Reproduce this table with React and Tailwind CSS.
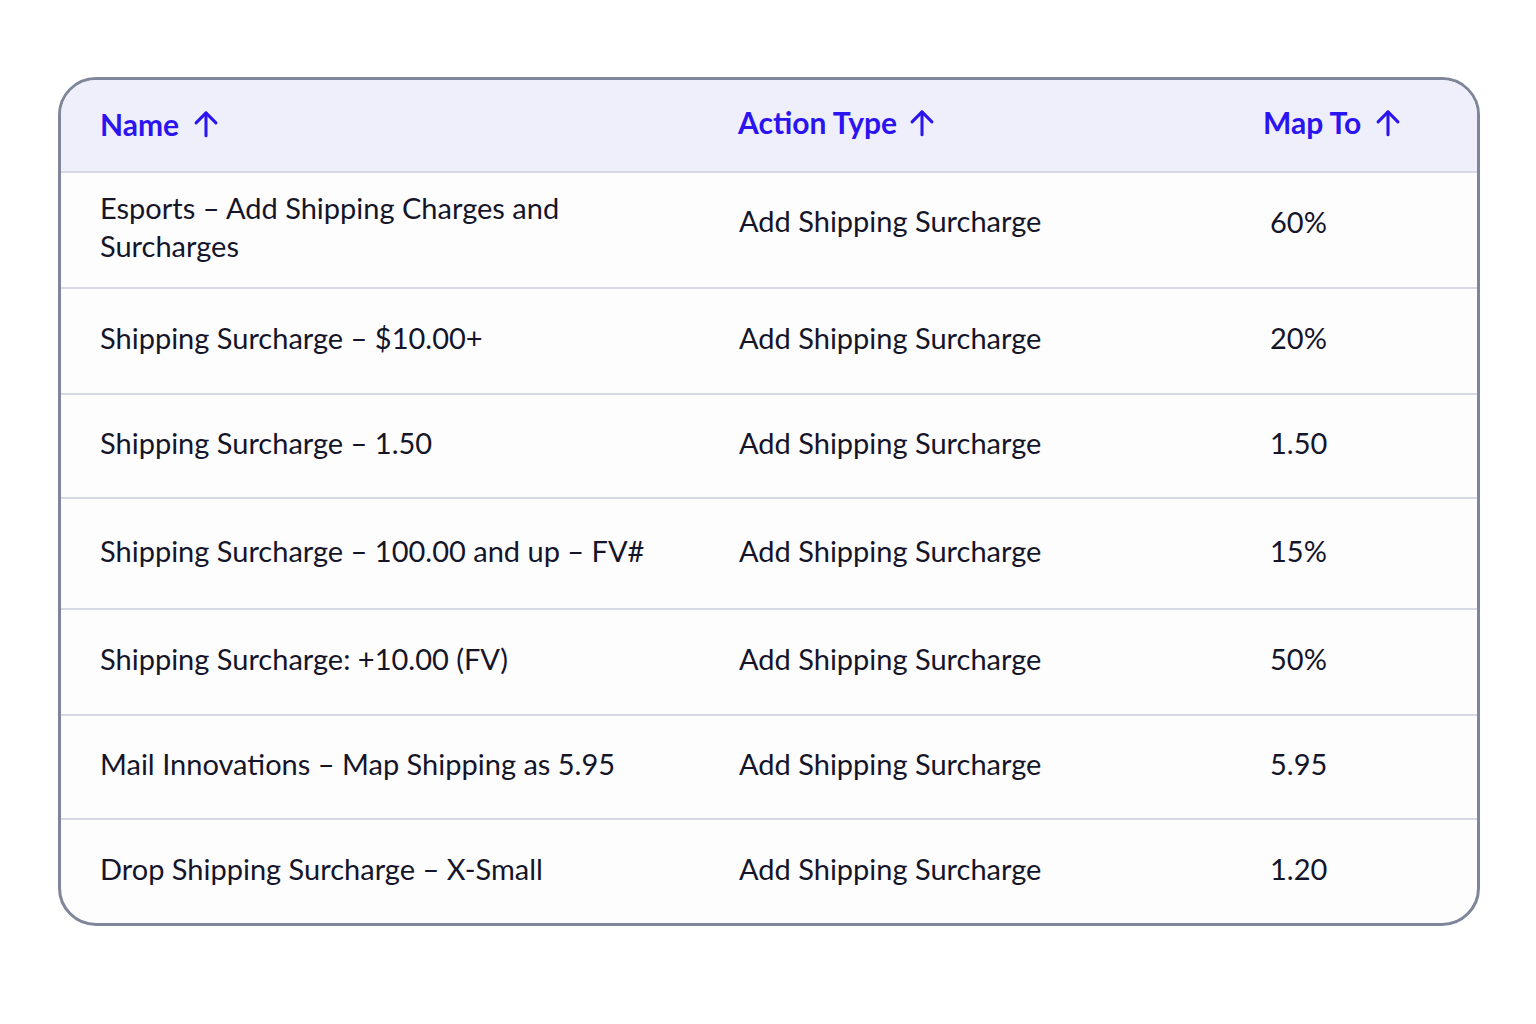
import React from "react";

const rows = [
  { name: "Esports – Add Shipping Charges and Surcharges", value: "60%", h: "h-[116px]", first: true },
  { name: "Shipping Surcharge – $10.00+", value: "20%", h: "h-[106px]" },
  { name: "Shipping Surcharge – 1.50", value: "1.50", h: "h-[104px]" },
  { name: "Shipping Surcharge – 100.00 and up – FV#", value: "15%", h: "h-[111px]" },
  { name: "Shipping Surcharge: +10.00 (FV)", value: "50%", h: "h-[106px]" },
  { name: "Mail Innovations – Map Shipping as 5.95", value: "5.95", h: "h-[104px]" },
  { name: "Drop Shipping Surcharge – X-Small", value: "1.20", h: "h-[103px]" },
];

function Arrow() {
  return (
    <svg width="28" height="28" viewBox="0 0 24 24" fill="none" stroke="currentColor" strokeWidth="2.6" strokeLinecap="round" strokeLinejoin="round">
      <path d="M12 22V2.5" />
      <path d="M3.5 11l8.5-8.5 8.5 8.5" />
    </svg>
  );
}

export default function App() {
  return (
    <div className="min-h-[1024px] w-[1536px] bg-white pt-[77px] pl-[58px]" style={{ fontFamily: "Lato, 'Open Sans', sans-serif" }}>
      <div className="w-[1422px] overflow-hidden rounded-[38px] border-[3px] border-[#7f8699] bg-[#fdfdfe]">
        <div className="flex h-[93px] items-center border-b-2 border-[#d6d9e3] bg-[#efeffb] pb-[6px] text-[30px] font-bold text-[#2b14f0]">
          <div className="flex w-[677px] items-center gap-[13px] pl-[39px] pt-[3px]">
            <span>Name</span>
            <Arrow />
          </div>
          <div className="flex w-[525px] items-center gap-[11px]">
            <span>Action Type</span>
            <Arrow />
          </div>
          <div className="flex items-center gap-[13px]">
            <span>Map To</span>
            <Arrow />
          </div>
        </div>
        {rows.map((r, i) => (
          <div
            key={i}
            className={`flex items-center pb-[6px] text-[29px] text-[#15152a] ${r.h} ${i < rows.length - 1 ? "border-b-2 border-[#d6d9e3]" : ""}`}
          >
            <div className="w-[678px] pl-[39px] pr-[70px] leading-[38px]">{r.name}</div>
            <div className={`w-[531px] ${r.first ? "mb-[12px]" : ""}`}>Add Shipping Surcharge</div>
            <div className={r.first ? "mb-[10px]" : ""}>{r.value}</div>
          </div>
        ))}
      </div>
    </div>
  );
}
